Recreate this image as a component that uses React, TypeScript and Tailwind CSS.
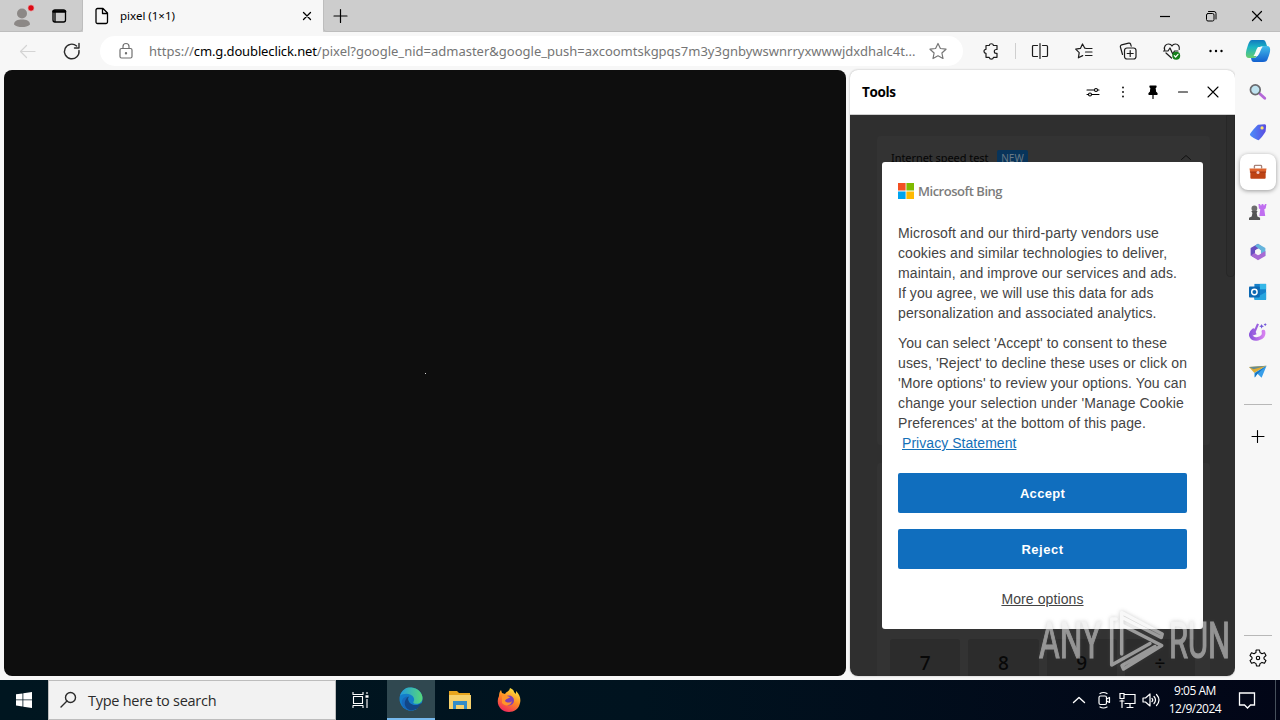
import type { ReactNode, SVGProps } from "react";

function Icon({ children, ...props }: SVGProps<SVGSVGElement>) {
  return (
    <svg
      width="20"
      height="20"
      viewBox="0 0 20 20"
      fill="none"
      stroke="currentColor"
      strokeWidth="1.2"
      strokeLinecap="round"
      strokeLinejoin="round"
      {...props}
    >
      {children}
    </svg>
  );
}

function TitleBar() {
  return (
    <header className="flex h-8 shrink-0 bg-[#cdcdcd]">
      <div className="flex w-[83px] items-center rounded-br-[4px] border-r border-b border-[#bdbdbd]">
        <svg className="ml-3" width="24" height="26" viewBox="0 0 24 26">
          <circle cx="10" cy="10.5" r="5" fill="#8c8886" />
          <path d="M2 21.5c0-4 4-5 8-5s8 1 8 5c-2 2-5 2.500-8 2.500s-6-.5-8-2.500z" fill="#8c8886" />
          <circle cx="19" cy="5" r="3.200" fill="#dc0a14" stroke="#e8d8d8" strokeWidth=".6" />
        </svg>
        <Icon className="ml-[13px]" strokeWidth="1.3">
          <rect x="4" y="4" width="12.500" height="12" rx="2" />
          <path d="M4.500 5.500h11.500" strokeWidth="2.500" />
          <path d="M6 5v10.500" strokeWidth="1.300" />
        </Icon>
      </div>
      <div className="flex w-[240px] items-center bg-[#f7f7f7]">
        <Icon className="ml-[9px]" strokeWidth="1.300">
          <path d="M5.500 2.500h5.500l4.500 4.500v9a1.500 1.500 0 0 1-1.500 1.500H5.500A1.500 1.500 0 0 1 4 16V4a1.500 1.500 0 0 1 1.500-1.500zM10.500 2.700v4.800h4.700" />
        </Icon>
        <span className="ml-2 w-[177px] font-['Noto_Sans'] text-[11.500px] leading-4">pixel (1×1)</span>
        <Icon strokeWidth="1.300">
          <path d="m6.500 6.500 7 7M13.500 6.500l-7 7" />
        </Icon>
      </div>
      <div className="flex flex-1 items-center rounded-bl-[4px] border-b border-l border-[#bdbdbd]">
        <Icon className="ml-[6px]">
          <path d="M4 10h13M10.500 3.500v13" />
        </Icon>
        <div className="ml-auto flex items-center gap-[26px] pr-[13px]">
          <Icon strokeLinecap="butt">
            <path d="M5 10.500h10" />
          </Icon>
          <Icon strokeWidth="1">
            <rect x="5.500" y="7.500" width="7.500" height="7.500" rx="1.500" />
            <path d="M7.500 5.500h5.500a2 2 0 0 1 2 2v5.500" />
          </Icon>
          <Icon>
            <path d="m5.500 5.500 9 9M14.500 5.500l-9 9" />
          </Icon>
        </div>
      </div>
    </header>
  );
}

function Toolbar() {
  return (
    <div className="flex h-[38px] shrink-0 items-center">
      <Icon className="ml-[18px] text-[#d4d4d4]">
        <path d="M17 10.500H2.500M8.500 4.500l-6 6 6 6" />
      </Icon>
      <Icon className="ml-6 text-[#2b2b2b]" strokeWidth="1.400">
        <path d="M17 9.500a7.300 7.300 0 1 1-2.400-4.500M17 2.500v4.500h-4.500" />
      </Icon>
      <div className="ml-[18px] flex h-[30px] w-[863px] items-center rounded-full bg-white">
        <Icon className="ml-4 text-[#707070]">
          <rect x="4" y="7.500" width="12" height="9.500" rx="1.500" />
          <path d="M7 7.500V5.500a3 3 0 0 1 6 0v2" />
          <circle cx="10" cy="12.300" r=".6" fill="currentColor" />
        </Icon>
        <div className="ml-[13px] w-[779px] font-['Noto_Sans'] text-[13px] leading-5 whitespace-nowrap text-[#757575]">
          <span>https://</span>
          <span className="tracking-[-0.130px] text-black">cm.g.doubleclick.net</span>
          <span>
            /pixel?google_nid=admaster&amp;google_push=axcoomtskgpqs7m3y3gnbywswnrryxwwwjdxdhalc4t...
          </span>
        </div>
        <Icon className="text-[#767676]">
          <path d="m10 2.500 2.400 5 5.600.7-4.100 3.800 1.100 5.500-5-2.700-5 2.700 1.100-5.500L2 8.200l5.600-.7z" />
        </Icon>
      </div>
      <div className="flex flex-1 items-center text-[#1c1c1c]">
        <Icon className="ml-[18px]">
          <path d="M5 4.500h3.200a2.200 2.200 0 0 1 4.300 0H16v4h-.8a1.900 1.900 0 0 0 0 3.800h.8v4h-3.500a2.200 2.200 0 0 1-4.300 0H5v-4a2 2 0 0 1 0-4z" />
        </Icon>
        <div className="ml-[14px] h-4 w-px bg-[#cfcfcf]" />
        <Icon className="ml-[14px]">
          <path d="M7.500 4.500h-4a1 1 0 0 0-1 1v9a1 1 0 0 0 1 1h4M12.500 4.500h4a1 1 0 0 1 1 1v9a1 1 0 0 1-1 1h-4M10 2.500v15" />
        </Icon>
        <Icon className="ml-6">
          <path d="M12.500 7.500 10.800 7.200 8.500 3 6.400 7.400 1.700 8.200l3.500 3.500-.8 5.100 4.300-2.200M11.500 7.500h6.500M11.500 11h6.500M11.500 14.500h6.500" />
        </Icon>
        <Icon className="ml-6">
          <rect x="6.500" y="7" width="11.500" height="11" rx="2.500" />
          <path d="M12.200 9.500v6M9.200 12.500h6M4.500 13.500 2.400 6a1.700 1.700 0 0 1 1.200-2.100l7-1.800a1.700 1.700 0 0 1 2 1l.6 2" />
        </Icon>
        <Icon className="ml-6">
          <path d="M2.700 9C1.500 5.500 4 3 6.500 3c1.800 0 3 1 3.500 2 .5-1 1.700-2 3.500-2 2.500 0 4.500 2.500 3.700 5.500M4 12l5.500 5M1.500 10H6l2-3 2.700 6 1.800-3H16" />
          <circle cx="14.200" cy="14.700" r="4" fill="#16801c" stroke="none" />
          <path d="m12.300 14.700 1.300 1.300 2.400-2.700" stroke="white" />
        </Icon>
        <svg className="ml-6" width="20" height="20" viewBox="0 0 20 20">
          <circle cx="4.500" cy="10" r="1.200" />
          <circle cx="10" cy="10" r="1.200" />
          <circle cx="15.500" cy="10" r="1.200" />
        </svg>
      </div>
    </div>
  );
}

const intro = [
  { text: "Microsoft and our third-party vendors use", tracking: "tracking-[0.14px]" },
  { text: "cookies and similar technologies to deliver,", tracking: "tracking-[0.09px]" },
  { text: "maintain, and improve our services and ads.", tracking: "tracking-[0.1px]" },
  { text: "If you agree, we will use this data for ads", tracking: "tracking-[0.06px]" },
  { text: "personalization and associated analytics.", tracking: "tracking-[0.1px]" },
];

const choices = [
  { text: "You can select 'Accept' to consent to these", tracking: "tracking-[0.1px]" },
  { text: "uses, 'Reject' to decline these uses or click on", tracking: "tracking-[0.09px]" },
  { text: "'More options' to review your options. You can", tracking: "tracking-[0.1px]" },
  { text: "change your selection under 'Manage Cookie", tracking: "tracking-[0.13px]" },
  { text: "Preferences' at the bottom of this page.", tracking: "tracking-[0.1px]" },
];

function CookieDialog() {
  return (
    <div className="absolute top-[47px] left-8 h-[467px] w-[321px] rounded-[3px] bg-white px-4 pt-5 font-['Liberation_Sans'] text-[14px] leading-5 text-[#444444]">
      <div className="flex h-[18px] items-center">
        <svg width="16" height="16" viewBox="0 0 16 16">
          <path d="M0 0h7.600v7.600H0z" fill="#f25022" />
          <path d="M8.400 0H16v7.600H8.400z" fill="#7fba00" />
          <path d="M0 8.400h7.600V16H0z" fill="#00a4ef" />
          <path d="M8.400 8.400H16V16H8.400z" fill="#ffb900" />
        </svg>
        <span className="ml-1 font-['Open_Sans'] text-[13px] font-semibold tracking-[-0.480px] text-[#7c7c7c]">
          Microsoft Bing
        </span>
      </div>
      <div className="mt-[23px] whitespace-nowrap">
        {intro.map((line) => (
          <p key={line.text} className={line.tracking}>{line.text}</p>
        ))}
      </div>
      <div className="mt-2.5 whitespace-nowrap">
        {choices.map((line) => (
          <p key={line.text} className={line.tracking}>{line.text}</p>
        ))}
        <a href="#privacy" className="ml-1 tracking-[0.050px] text-[#1470b8] underline">Privacy Statement</a>
      </div>
      <button className="mt-5 block h-10 w-full rounded-[2px] bg-[#106ebe] pt-0.5 text-[13px] font-bold tracking-[0.300px] text-white">
        Accept
      </button>
      <button className="mt-4 block h-10 w-full rounded-[2px] bg-[#106ebe] pt-0.5 text-[13px] font-bold tracking-[0.500px] text-white">
        Reject
      </button>
      <div className="mt-5 text-center tracking-[0.100px] underline">More options</div>
    </div>
  );
}

function ToolsPanel() {
  return (
    <section className="flex w-[385px] flex-col overflow-hidden rounded-lg bg-white shadow-[0_0_2px_#aaa]">
      <div className="flex h-[45px] shrink-0 items-center gap-2.5 border-b border-[#d0d0d0] pr-3 pl-3">
        <h2 className="mr-auto font-['Open_Sans'] text-[13.500px] font-bold tracking-[-0.350px]">Tools</h2>
        <Icon strokeWidth="1.100">
          <path d="M4 8h7M15 8h1M4 12.500h1M9 12.500h7" />
          <circle cx="13" cy="8" r="1.500" />
          <circle cx="7" cy="12.500" r="1.500" />
        </Icon>
        <svg width="20" height="20" viewBox="0 0 20 20">
          <circle cx="10" cy="5.500" r=".9" />
          <circle cx="10" cy="10" r=".9" />
          <circle cx="10" cy="14.500" r=".9" />
        </svg>
        <Icon>
          <path d="M7 4h6v1l-1 .8.5 4 1.500 1.700v.8H6v-.8l1.500-1.700.5-4L7 5z" fill="currentColor" />
          <path d="M10 12v4.500" />
        </Icon>
        <Icon>
          <path d="M5.500 10h9" />
        </Icon>
        <Icon strokeWidth="1.100">
          <path d="m5 5 10 10M15 5 5 15" />
        </Icon>
      </div>
      <div className="relative flex flex-1 overflow-hidden bg-[#2f2f2f]">
        <div className="ml-[27px] flex w-[333px] flex-col gap-[18px] pt-[21px] font-['Noto_Sans']">
          <div className="h-[309px] rounded-[4px] bg-[#333333]">
            <div className="flex items-center pt-[12px] pl-[14px]">
              <span className="w-[98px] text-[11px] tracking-[-0.060px] whitespace-nowrap text-[#050505]">Internet speed test</span>
              <span className="ml-2 flex h-[17px] w-[31px] items-center justify-center rounded-[2px] bg-[#08345a] text-[10px] text-[#6a7a86]">
                NEW
              </span>
              <Icon className="ml-[148px] text-[#101010]" strokeWidth="1">
                <path d="m5.500 11.500 4.500-4 4.500 4" />
              </Icon>
            </div>
          </div>
          <div className="flex h-[213px] items-end rounded-t-[4px] bg-[#333333] pr-[15px] pl-[13px]">
            <div className="grid h-[37px] w-full grid-cols-4 gap-2 text-center text-[19px] leading-[49px] font-medium text-[#080808]">
              {["7", "8", "9", "÷"].map((key) => (
                <span key={key} className="h-[50px] rounded-[3px] bg-[#2c2c2c]">{key}</span>
              ))}
            </div>
          </div>
        </div>
        <div className="ml-auto h-[162px] w-[9px] rounded-b-[4px] border border-[#272727] bg-[#2d2d2d]" />
        <CookieDialog />
      </div>
    </section>
  );
}

const sidebarIcons: { name: string; art: ReactNode }[] = [
  {
    name: "search",
    art: (
      <>
        <path d="m12 12 5.500 5" stroke="#b468d8" strokeWidth="3.200" strokeLinecap="round" />
        <circle cx="7" cy="7.500" r="5.400" fill="#bfe3f0" stroke="#6b6b6f" strokeWidth="1.900" />
      </>
    ),
  },
  {
    name: "shopping",
    art: (
      <>
        <path d="m10 2 7.500-.7c1 0 1.500 1 1.500 2l-.5 6c0 1-5.500 8.500-7.500 9.700-1 .6-10-4.500-10-6S9 2.500 10 2z" fill="url(#tag)" />
        <circle cx="14.500" cy="5.500" r="1.800" fill="#ffe36b" />
      </>
    ),
  },
  {
    name: "tools",
    art: (
      <>
        <path d="M6 6V3.500c0-.6.400-.9 1-.9h6c.600 0 1 .3 1 .9V6" fill="none" stroke="#a8837a" strokeWidth="1.500" />
        <path d="M.5 6h19l-.8 4.500H1.300z" fill="#de642e" />
        <path d="M1.500 10h17v6.500a1 1 0 0 1-1 1h-15a1 1 0 0 1-1-1z" fill="#be4314" />
        <path d="M1 10h18" stroke="#9d3415" />
        <circle cx="10" cy="10.500" r="1.700" fill="#efc9c6" />
      </>
    ),
  },
  {
    name: "games",
    art: (
      <>
        <path d="M10.500 1h2v1.500h1.500V1h2v1.500h1.500V1h2l-1 5-1.500 1 1 7.500h-6.500l1-7.500-1.500-1z" fill="#c06ff0" />
        <circle cx="6" cy="6" r="3.200" fill="#6d6d6d" />
        <path d="M2.500 9h7l-1 2 .8 4 3 1.500V19H0v-2.500L3 15l.8-4z" fill="#555" />
      </>
    ),
  },
  {
    name: "office",
    art: (
      <>
        <path d="M10 .8 1.800 5.500v8.500L7 17V8l7-4z" fill="#694fc0" />
        <path d="m10 .8 8.200 4.700v9L13 12V8L6.500 3z" fill="#65b4dc" />
        <path d="m2 13.800 5-3.300 4 2.500 7.200-4v5.500L10 19.200z" fill="#a76ad4" />
        <path d="m10 6.500 3.200 1.800v3.500L10 13.600l-3.200-1.800V8.300z" fill="#f7f7f7" />
      </>
    ),
  },
  {
    name: "outlook",
    art: (
      <>
        <path d="M6 1h13v17H6z" fill="#1680ca" />
        <path d="M12 1h7v6h-7z" fill="#35b7e8" />
        <path d="m6 11 6 3 7-4v9H6z" fill="#28a5df" />
        <rect x="0" y="4" width="12" height="12" rx="1" fill="#0b68b3" />
        <circle cx="6" cy="10" r="3" fill="none" stroke="#fff" strokeWidth="1.600" />
      </>
    ),
  },
  {
    name: "drop",
    art: (
      <>
        <path d="M5 8C-1 13 3 19 10 17.500c5-1 7-4 6-8" fill="none" stroke="url(#drop)" strokeWidth="4" strokeLinecap="round" />
        <path d="M10 1 5 12.500l3-1" fill="none" stroke="#9a60df" strokeWidth="2.400" />
        <path d="m14 1 .8 1.900 1.900.8-1.900.8-.8 1.900-.8-1.900-1.900-.8 1.900-.8zM18 0l.6 1.200 1.200.6-1.200.6L18 3.600l-.6-1.200-1.200-.6 1.200-.6z" fill="#7359d9" />
      </>
    ),
  },
  {
    name: "send",
    art: (
      <>
        <path d="M0 4.500 19.500 3 6 11z" fill="#dfad35" />
        <path d="M19.500 3 14 16.500 9.500 12 6 16v-5z" fill="#389ee9" />
        <path d="M19.500 3 7 11l-.5 5 3-4z" fill="#1774bf" />
        <path d="M0 4.500 19.500 3 5 7z" fill="#668c91" />
      </>
    ),
  },
];

function Sidebar() {
  return (
    <aside className="flex w-[45px] shrink-0 flex-col items-center bg-[#f7f7f7]">
      <svg className="mt-1.5 h-[26px] w-[26px] shrink-0" viewBox="0 0 26 26">
        <path d="M7 2h11c2 0 2.500 1.500 3 3l1 3h-4c-4 0-4 3-6 9-1 3-2 3-5 3H4c-5 0-3-7-1-13 1-3 2-5 4-5z" fill="url(#copilotA)" />
        <path d="M20 8h2c5 0 3 7 1 12-1 3-2 4-5 4H9c-2 0-2.500-1.500-3-4h3c3 0 4-3 5-7s3-5 6-5z" fill="url(#copilotB)" />
        <path d="M13 9h4.500c-2 2-2.500 7-5 9H8.500c2-2 2.500-7 4.500-9z" fill="#fafafa" />
      </svg>
      <div className="mt-2.5 flex flex-col gap-1">
        {sidebarIcons.map((item) => (
          <div
            key={item.name}
            className={
              item.name === "tools"
                ? "flex h-9 w-9 items-center justify-center rounded-lg bg-white shadow-[0_1px_4px_#999]"
                : "flex h-9 w-9 items-center justify-center"
            }
          >
            <svg width="18" height="18" viewBox="0 0 20 20">{item.art}</svg>
          </div>
        ))}
      </div>
      <div className="mt-[14px] h-px w-7 bg-[#b8b8b8]" />
      <Icon className="mt-[21px]" strokeWidth="1.100">
        <path d="M4 10.500h12M9.500 4.500v12" />
      </Icon>
      <div className="mt-auto h-px w-7 bg-[#b8b8b8]" />
      <Icon className="mt-3 mb-3" strokeWidth="1.100">
        <path d="m8 2.500.5-.5h3l.5 2.500 2 1.200 2.500-.9 1.500 2.700-2 1.800v1.500l2 1.800-1.500 2.700-2.500-.9-2 1.200-.5 2.400h-3L8 15.600l-2-1.200-2.500.9L2 12.600l2-1.800V9.300L2 7.500l1.500-2.700 2.500.9 2-1.200z" />
        <circle cx="10" cy="10" r="1.700" />
      </Icon>
      <svg className="absolute h-0 w-0">
        <defs>
          <linearGradient id="tag">
            <stop stopColor="#4b8efa" />
            <stop offset="1" stopColor="#5a4be0" />
          </linearGradient>
          <linearGradient id="drop">
            <stop stopColor="#8d58dc" />
            <stop offset="1" stopColor="#d580ef" />
          </linearGradient>
          <linearGradient id="copilotA" x2="0" y2="1">
            <stop stopColor="#1279bf" />
            <stop offset=".4" stopColor="#1bb4c4" />
            <stop offset="1" stopColor="#69cd6d" />
          </linearGradient>
          <linearGradient id="copilotB" x2="0" y2="1">
            <stop stopColor="#42bdea" />
            <stop offset="1" stopColor="#1260cf" />
          </linearGradient>
        </defs>
      </svg>
    </aside>
  );
}

function Taskbar() {
  return (
    <footer className="flex h-10 shrink-0 items-center bg-gradient-to-r from-[#001620] via-[#00131f] to-[#020617] font-['Open_Sans'] text-white">
      <div className="flex w-12 justify-center">
        <svg width="16" height="16" viewBox="0 0 16 16" fill="white">
          <path d="m0 2.300 6.500-.9v6.100H0zM7.300 1.300 16 0v7.500H7.300zM0 8.300h6.500v6.200L0 13.600zM7.300 8.300H16V16l-8.700-1.300z" />
        </svg>
      </div>
      <div className="flex h-10 w-[288px] items-center border border-[#bdbdbd] bg-[#f2f2f2] text-[#2b2b2b]">
        <Icon className="ml-[10px]" strokeWidth="1.400">
          <circle cx="11.500" cy="7.500" r="5" />
          <path d="m8 11-6 6" />
        </Icon>
        <span className="ml-[9px] pt-0.5 text-[14.500px] tracking-[-0.270px]">Type here to search</span>
      </div>
      <div className="flex w-[51px] justify-center">
        <Icon className="-ml-0.5" strokeLinecap="butt" strokeWidth="1.100">
          <path d="M2 2v2.500h10V2M2 18v-2.500h10V18M2.500 6.500h9v7h-9zM16 2v2M16 9v9" />
          <path d="M14.500 6.500h3" strokeWidth="2.500" />
        </Icon>
      </div>
      <div className="flex h-10 w-12 items-center justify-center border-b-2 border-[#76b9ed] bg-[#304850]">
        <svg width="24" height="24" viewBox="0 0 25 25">
          <defs>
            <linearGradient id="edge">
              <stop stopColor="#2199df" />
              <stop offset="1" stopColor="#56d879" />
            </linearGradient>
          </defs>
          <circle cx="12.500" cy="12.500" r="12" fill="#137dca" />
          <path d="M1 9C4 1 9 0 13 .5c7 .5 11.500 6 11.500 11 0 4-3 6-6 6s-4.500-1-3-3C17 11 13 7 8 7c-3 0-6 1-7 2z" fill="url(#edge)" />
          <path d="M9 10c-3 6 2 13 10 12-4 4-14 4-16-5-1-5 4-7 6-7z" fill="#1767ba" />
          <path d="M10 10c-2 4 1 9 7 9 3 0 5-1 6-2l1.500.5 1.500-2V25h-4l.5-4c-4 3-10 2-12-1-3-3-3-8-.5-10z" fill="#304850" />
          <path d="M10 10c-2 4 1 9 7 9 3 0 5-1 6-2-2 5-7 8-12 7-6-2-7-10-1-14z" fill="#124687" />
        </svg>
      </div>
      <div className="flex w-[49px] justify-center">
        <svg width="22" height="20" viewBox="0 0 22 20">
          <path d="M0 1h8l2 2h11v3H0z" fill="#e7a51d" />
          <path d="M0 5h22v14H0z" fill="#f6d16c" />
          <path d="M4 11h14v8h-3v-4H7v4H4z" fill="#338dc8" />
        </svg>
      </div>
      <div className="ml-px flex w-12 justify-center">
        <svg width="24" height="24" viewBox="0 0 24 24">
          <defs>
            <linearGradient id="fox" x1=".8" y1="0" x2=".3" y2="1">
              <stop stopColor="#fff044" />
              <stop offset=".5" stopColor="#ff8b23" />
              <stop offset="1" stopColor="#f0265d" />
            </linearGradient>
          </defs>
          <path d="M2 8C2 5 3 3 4 2l1 3 3 1c2-3 4-2 5-6 3 1 4 3 4 4l2 2V3c4 4 5 8 4 12-1 6-6 9-11 9C4 24-2 16 2 8z" fill="url(#fox)" />
          <circle cx="12" cy="12.500" r="5" fill="#8040b4" />
          <path d="M5 8c3-2 5 0 8 1-1 2-4 1-5 4 2 2 5 2 7 0-1 5-7 6-10 2z" fill="#ff942a" />
        </svg>
      </div>
      <div className="ml-auto flex h-10 items-center">
        <Icon className="mr-1" strokeWidth="1.400">
          <path d="m4.500 12.500 5.500-5 5.500 5" />
        </Icon>
        <Icon className="mr-1">
          <rect x="6" y="6" width="7.500" height="8.500" rx="1.500" />
          <path d="m13.500 9 3-1.500v5l-3-1.500M7 3.500q3.500-2 7 0M7 17q3.500 2 7 0" />
        </Icon>
        <Icon className="mr-1" strokeLinejoin="miter">
          <path d="M7 4.500h11v9H8M5 10v7.500M10 17.500h6M13 13.500v4M3 3.500h4v5H3zM3 11h4" />
        </Icon>
        <Icon className="mr-1.5">
          <path d="M2 8h2.500L9 4v12l-4.500-4H2zM11 8.500q1.500 1.500 0 3M13 6.500q3 3.500 0 7M15.500 4.500q5 5.500 0 11" />
        </Icon>
        <div className="w-14 text-center text-[12px] leading-[18px] tracking-[-0.480px] whitespace-nowrap">
          <div>9:05 AM</div>
          <div>12/9/2024</div>
        </div>
        <Icon className="ml-[14px]" strokeWidth="1.300" strokeLinejoin="miter">
          <path d="M2.500 3h15v12h-4l-3 3-3-3h-5z" />
        </Icon>
        <div className="ml-[18px] h-10 w-[5px] border-l border-[#46505b]" />
      </div>
    </footer>
  );
}

function Watermark() {
  return (
    <svg
      className="absolute top-[608px] left-[1037px] overflow-visible font-['Roboto'] font-normal drop-shadow-[0_0_2px_#55555588]"
      width="204"
      height="68"
      viewBox="0 0 204 68"
      fill="none"
      opacity=".55"
    >
      <g fill="#e8e8e8" stroke="#e8e8e8" strokeWidth="1.200" fontSize="50">
        <text x="2" y="50" textLength="62" lengthAdjust="spacingAndGlyphs">ANY</text>
        <text x="132" y="50" textLength="61" lengthAdjust="spacingAndGlyphs">RUN</text>
      </g>
      <g stroke="#f3f3f3" strokeWidth="3.500" strokeLinejoin="round" strokeLinecap="round">
        <path d="M79 11h-4.300v46L113 35.500" />
        <path d="M84.700 46V4.500l40.500 21.500-1 3.500-39-20" />
        <path d="m84.700 17 40 20.500L86.500 61l-1.500-3.500 33-19" />
      </g>
    </svg>
  );
}

export default function App() {
  return (
    <div className="relative flex h-[720px] w-[1280px] flex-col overflow-hidden bg-[#f7f7f7] text-black">
      <TitleBar />
      <div className="flex h-[648px] shrink-0">
        <div className="flex w-[1235px] flex-col">
          <Toolbar />
          <div className="flex h-[606px] gap-1 pl-1">
            <main className="flex w-[842px] items-center justify-center rounded-lg bg-[#0e0e0e]">
              <div className="h-px w-px bg-[#d8d8d8]" />
            </main>
            <ToolsPanel />
          </div>
        </div>
        <Sidebar />
      </div>
      <Taskbar />
      <Watermark />
    </div>
  );
}
